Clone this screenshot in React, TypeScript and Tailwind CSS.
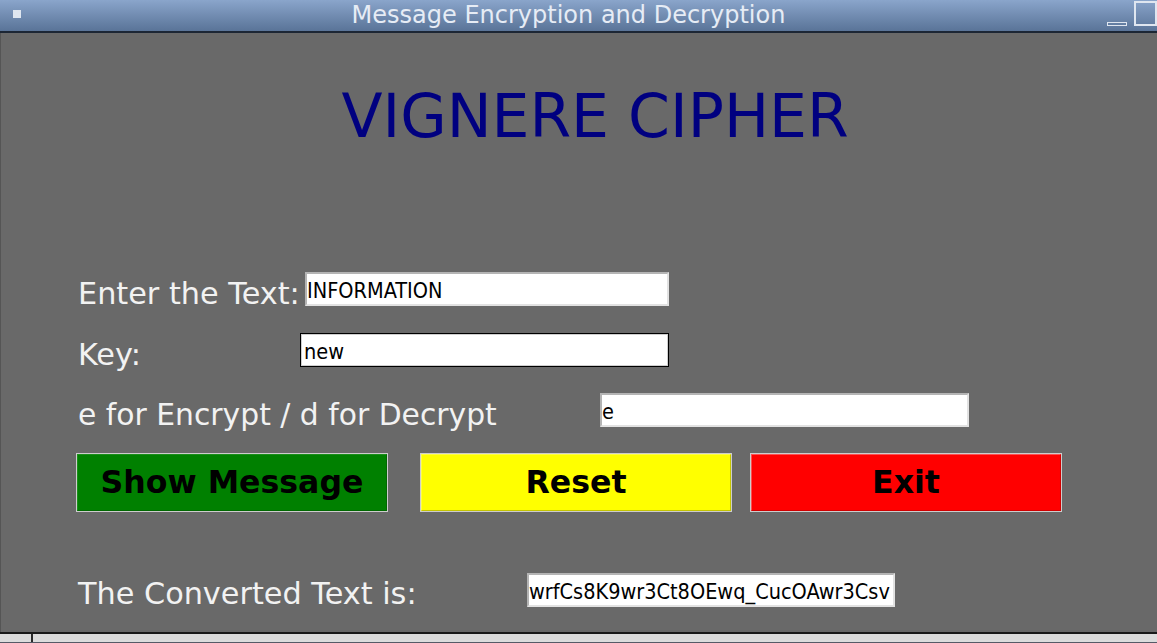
import React from "react";

const Entry = ({ value, width, focused = false, clip = false }: { value: string; width: number; focused?: boolean; clip?: boolean }) => (
  <div
    className={
      focused
        ? "h-[34px] border border-black bg-white flex items-stretch"
        : "h-[34px] border-2 border-t-[#b4b4b4] border-l-[#b4b4b4] border-b-[#e2e2e2] border-r-[#e2e2e2] bg-white flex items-stretch"
    }
    style={{ width }}
  >
    <div className={(focused ? "border border-[#cfcfcf] pl-[2px] " : "pl-[0px] ") + "w-full flex items-center " + (clip ? "overflow-hidden" : "")}>
      <span
        className="whitespace-nowrap text-[21.5px] leading-[26px] text-black pt-[3px]"
        style={{ fontFamily: '"DejaVu Sans Condensed", "DejaVu Sans", sans-serif', fontStretch: "condensed" }}
      >
        {value}
      </span>
    </div>
  </div>
);

const Btn = ({ label, bg, light, dark }: { label: string; bg: string; light: string; dark: string }) => (
  <div className="w-[312px] h-[59px] border border-[#cdcdcd]">
    <div
      className="h-full w-full border flex items-center justify-center text-black font-bold text-[31.6px] leading-none"
      style={{ background: bg, borderTopColor: light, borderLeftColor: light, borderBottomColor: dark, borderRightColor: dark }}
    >
      {label}
    </div>
  </div>
);

export default function App() {
  const sans = { fontFamily: '"DejaVu Sans", "Liberation Sans", sans-serif' };
  return (
    <div className="w-[1157px] h-[643px] flex flex-col overflow-hidden bg-[#696969]" style={sans}>
      {/* title bar */}
      <div className="h-[31px] flex items-stretch bg-gradient-to-b from-[#8aa5cb] to-[#5a7498] shrink-0">
        <div className="w-[30px] flex items-start">
          <div className="ml-[13px] mt-[10px] w-[8px] h-[8px] bg-[#dfe6f0]" />
        </div>
        <div className="flex-1 text-center text-[24px] leading-[30px] text-[#e6ecf5]">Message Encryption and Decryption</div>
        <div className="w-[50px] flex items-start">
          <div className="mt-[22px] w-[26px] h-[4px] border border-[#dfe6f0]" />
          <div className="ml-[7px] mt-[1px] w-[30px] h-[25px] border-2 border-[#dfe6f0]" />
        </div>
      </div>
      <div className="h-[2px] bg-[#1c2634] shrink-0" />

      {/* body */}
      <div className="flex-1 flex flex-col border-l border-[#555555]">
        <h1 className="mt-[48px] pl-[32px] text-center text-[60px] leading-[70px] text-[#000080] font-normal">VIGNERE CIPHER</h1>

        <div className="mt-[121px] flex items-start pl-[77px] h-[34px]">
          <div className="w-[227px] mt-[5px] text-[30.3px] leading-[34px] text-[#f2f2f2] whitespace-nowrap">Enter the Text:</div>
          <Entry value="INFORMATION" width={364} />
        </div>

        <div className="mt-[27px] flex items-start pl-[77px] h-[34px]">
          <div className="w-[222px] mt-[5px] text-[30.3px] leading-[34px] text-[#f2f2f2] whitespace-nowrap">Key:</div>
          <Entry value="new" width={369} focused />
        </div>

        <div className="mt-[26px] flex items-start pl-[77px] h-[34px]">
          <div className="w-[522px] mt-[5px] text-[29.8px] leading-[34px] text-[#f2f2f2] whitespace-nowrap">e for Encrypt / d for Decrypt</div>
          <Entry value="e" width={369} />
        </div>

        <div className="mt-[26px] flex items-start pl-[75px]">
          <Btn label="Show Message" bg="#008000" light="#1a8f1a" dark="#006800" />
          <div className="w-[32px]" />
          <Btn label="Reset" bg="#ffff00" light="#ffff40" dark="#c4c400" />
          <div className="w-[18px]" />
          <Btn label="Exit" bg="#ff0000" light="#ff5050" dark="#d00000" />
        </div>

        <div className="mt-[61px] flex items-start pl-[77px] h-[34px]">
          <div className="w-[449px] mt-[4px] text-[30.3px] leading-[34px] text-[#f2f2f2] whitespace-nowrap">The Converted Text is:</div>
          <Entry value="wrfCs8K9wr3Ct8OEwq_CucOAwr3Csv" width={368} clip />
        </div>
        <div className="flex-1" />
      </div>

      {/* bottom bar */}
      <div className="h-[2px] bg-[#1a1a1a] shrink-0" />
      <div className="h-[8px] flex shrink-0 bg-[#dcdcdc]">
        <div className="w-[31px] bg-[#dcdcdc]" />
        <div className="w-[2px] bg-[#2a2a2a]" />
        <div className="flex-1 bg-[#dcdcdc]" />
      </div>
      <div className="h-[1px] bg-[#555a66] shrink-0" />
    </div>
  );
}
